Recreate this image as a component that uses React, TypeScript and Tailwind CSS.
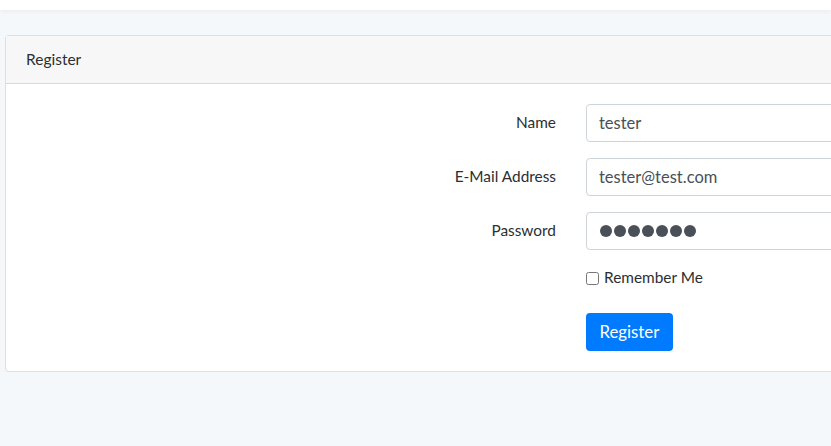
import React, { useState } from 'react';

const font = { fontFamily: 'Lato, "Open Sans", sans-serif' };

const Field: React.FC<{ label: string; children: React.ReactNode }> = ({ label, children }) => (
  <div className="flex items-center h-[38px] mb-4">
    <label className="w-[580px] pr-[30px] text-right text-[15.4px] text-[#2b2f33]">{label}</label>
    <div className="flex-1">{children}</div>
  </div>
);

export default function App() {
  const [name, setName] = useState('tester');
  const [email, setEmail] = useState('tester@test.com');
  const [remember, setRemember] = useState(false);

  const inputCls =
    'w-[300px] h-[38px] px-3 rounded-[4px] border border-[#ced4da] bg-white text-[16.5px] text-[#495057] outline-none';

  return (
    <div className="w-[831px] h-[446px] overflow-hidden bg-[#f5f8fa]" style={font}>
      {/* navbar */}
      <div className="h-[10px] bg-white shadow-[0_2px_4px_rgba(0,0,0,0.04)]" />

      <main className="pt-[25px] pl-[5px]">
        <div className="w-[900px] bg-white border border-[rgba(0,0,0,0.125)] rounded-[4px]">
          <div className="h-[48px] flex items-center px-5 bg-[#f7f7f7] border-b border-[rgba(0,0,0,0.125)] text-[15.5px] text-[#2b2f33]">
            Register
          </div>

          <form className="pt-5 pb-5" onSubmit={(e) => e.preventDefault()}>
            <Field label="Name">
              <input className={inputCls} value={name} onChange={(e) => setName(e.target.value)} />
            </Field>
            <Field label="E-Mail Address">
              <input className={inputCls} value={email} onChange={(e) => setEmail(e.target.value)} />
            </Field>
            <Field label="Password">
              {/* masked password, drawn as dots */}
              <div className="w-[300px] h-[38px] pl-[13px] flex items-center gap-[2px] rounded-[4px] border border-[#ced4da] bg-white">
                {Array.from({ length: 7 }).map((_, i) => (
                  <span key={i} className="w-[12px] h-[12px] rounded-full bg-[#495057]" />
                ))}
              </div>
            </Field>

            <div className="flex h-[31px] mb-4">
              <div className="w-[580px]" />
              <label className="flex items-center gap-[5px] h-[24px] text-[15.4px] text-[#2b2f33]">
                <input
                  type="checkbox"
                  checked={remember}
                  onChange={(e) => setRemember(e.target.checked)}
                  className="w-[13px] h-[13px] m-0"
                />
                Remember Me
              </label>
            </div>

            <div className="flex">
              <div className="w-[580px]" />
              <button
                type="submit"
                className="h-[38px] px-[13.5px] rounded-[4px] bg-[#007bff] text-white text-[16.8px]"
              >
                Register
              </button>
            </div>
          </form>
        </div>
      </main>
    </div>
  );
}
